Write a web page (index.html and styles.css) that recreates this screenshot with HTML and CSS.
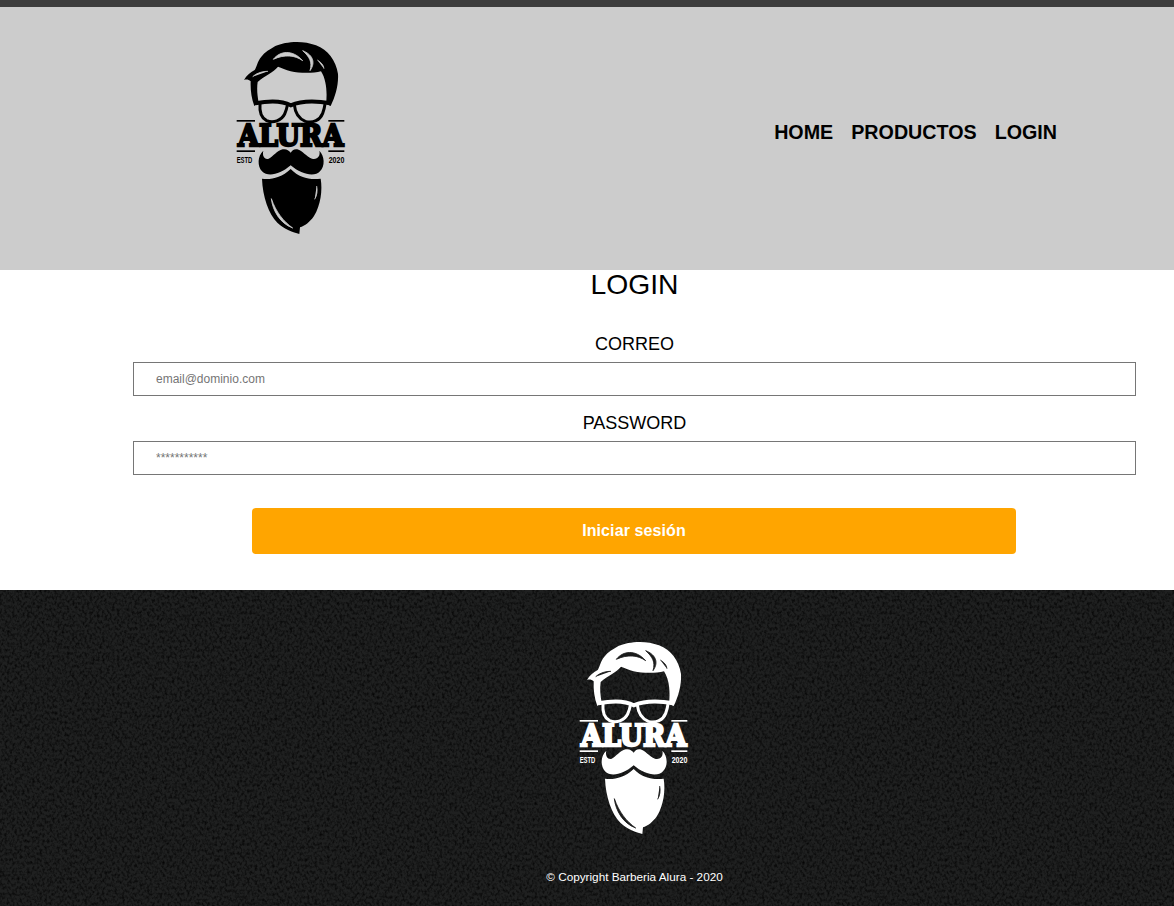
FILE: index.html
```html
<!DOCTYPE html>
<html lang="es">
<head>
    <meta charset="utf-8">
    <title>Barberia Alura</title>
    <link rel="stylesheet" href="styles.css">
</head>
<body>
    <!-- logo drawing, used twice: header (black) and footer (white) -->
    <svg class="defs" width="0" height="0">
        <symbol id="logo-art" viewBox="0 0 420 645">
            <path d="M72 150 C80 136 90 128 104 120 C110 112 112 94 124 80 C134 66 150 58 166 48 C196 34 250 30 288 46 C324 60 348 92 354 132 C356 165 346 200 332 228 L318 222 C322 190 320 150 303 124 C280 130 240 130 212 124 C198 120 184 114 174 110 C160 128 134 136 113 156 C110 176 112 196 116 218 L103 228 C94 205 91 178 92 154 C86 148 78 148 72 150 Z"/>
            <path class="cut" d="M160 88 C180 62 218 58 248 92 C226 76 194 72 160 88 Z"/>
            <path class="cut" d="M248 62 C274 72 290 94 270 122 C278 96 268 80 248 62 Z"/>
            <path class="cut" d="M292 90 C304 98 310 104 312 116"/>
            <path class="cut" d="M98 140 C112 128 128 124 144 124"/>
            <g class="frame">
                <path class="brow" d="M106 220 C150 212 190 214 212 226 C240 214 285 212 332 220"/>
                <path d="M120 222 C118 246 124 264 140 272 C160 280 184 272 194 252 C199 242 201 232 203 222"/>
                <path d="M223 224 C225 246 236 266 256 274 C280 280 300 270 308 250 C312 240 314 230 315 222"/>
            </g>
            <rect x="50" y="270" width="55" height="5"/>
            <rect x="325" y="270" width="48" height="5"/>
            <rect x="50" y="361" width="55" height="5"/>
            <rect x="325" y="361" width="48" height="5"/>
            <path d="M130 362 C112 378 112 408 126 424 C144 442 180 434 212 406 C244 434 284 442 300 424 C316 408 314 378 298 362 C302 378 292 390 276 386 C258 380 248 362 232 358 C222 356 216 362 212 368 C206 360 198 356 188 358 C170 362 160 380 146 386 C134 390 126 378 130 362 Z"/>
            <path d="M126 446 C150 450 184 444 212 417 C238 444 270 450 302 446 C308 480 302 526 282 558 C270 576 254 588 240 592 L238 612 C220 606 192 598 172 578 C146 552 128 500 126 446 Z"/>
            <path class="cut" d="M154 506 C158 542 180 580 218 594 C190 574 168 546 154 506 Z"/>
            <path class="cut" d="M290 468 C293 482 291 496 284 508"/>
        </symbol>
    </svg>

    <div class="top-bar"></div>

    <header class="site-header">
        <svg class="logo logo-dark" viewBox="0 0 420 645">
            <use href="#logo-art" width="420" height="645"/>
            <text class="logo-name" x="54" y="349" textLength="316" lengthAdjust="spacingAndGlyphs">ALURA</text>
            <text class="logo-date" x="50" y="400" textLength="47" lengthAdjust="spacingAndGlyphs">ESTD</text>
            <text class="logo-date" x="326" y="400" textLength="47" lengthAdjust="spacingAndGlyphs">2020</text>
        </svg>
        <nav class="menu">
            <a href="#">HOME</a>
            <a href="#">PRODUCTOS</a>
            <a href="#">LOGIN</a>
        </nav>
    </header>

    <main class="login">
        <h1>LOGIN</h1>
        <form class="login-form">
            <label for="correo">CORREO</label>
            <input id="correo" type="email" placeholder="email@dominio.com">
            <label for="password">PASSWORD</label>
            <input id="password" type="password" placeholder="***********">
            <button type="button">Iniciar sesión</button>
        </form>
    </main>

    <footer class="site-footer">
        <!-- grain of the footer background -->
        <svg class="grain" width="100%" height="100%">
            <filter id="noise" x="0" y="0" width="100%" height="100%">
                <feTurbulence type="fractalNoise" baseFrequency="0.4 0.32" numOctaves="2" seed="7"/>
                <feColorMatrix type="matrix" values="0 0 0 0 0  0 0 0 0 0  0 0 0 0 0  1.7 0 0 0 -0.68"/>
            </filter>
            <rect width="100%" height="100%" filter="url(#noise)"/>
        </svg>
        <svg class="logo logo-light" viewBox="0 0 420 645">
            <use href="#logo-art" width="420" height="645"/>
            <text class="logo-name" x="54" y="349" textLength="316" lengthAdjust="spacingAndGlyphs">ALURA</text>
            <text class="logo-date" x="50" y="400" textLength="47" lengthAdjust="spacingAndGlyphs">ESTD</text>
            <text class="logo-date" x="326" y="400" textLength="47" lengthAdjust="spacingAndGlyphs">2020</text>
        </svg>
        <p>© Copyright Barberia Alura - 2020</p>
    </footer>
</body>
</html>
```

FILE: styles.css
```css
body {
    margin: 0;
    font-family: "Liberation Sans", Arial, sans-serif;
    color: #000;
    background-color: #fff;
}

.defs {
    display: block;
    height: 0;
}

.top-bar {
    height: 7px;
    background-color: #3d3d3d;
}

/* Logo */
.logo {
    display: block;
    flex-shrink: 0;
    width: 140px;
    height: 215px;
}

.logo-dark {
    fill: #000;
    color: #000;
    --cut: #ccc;
}

.logo-light {
    fill: #fff;
    color: #fff;
    --cut: #1a1b1b;
}

.cut {
    fill: var(--cut);
    stroke: var(--cut);
    stroke-width: 2.5;
}

.frame {
    fill: none;
    stroke: currentColor;
    stroke-width: 9;
}

.brow {
    stroke-width: 12;
}

.logo-name {
    font-family: "DejaVu Serif", serif;
    font-size: 87px;
    font-weight: bold;
    stroke: currentColor;
    stroke-width: 7;
}

.logo-date {
    font-family: "Liberation Sans", Arial, sans-serif;
    font-size: 28px;
    font-weight: bold;
}

/* Header */
.site-header {
    display: flex;
    justify-content: space-between;
    height: 263px;
    padding: 23px 117px 0 220px;
    box-sizing: border-box;
    background-color: #ccc;
}

.menu {
    display: flex;
    gap: 18px;
    margin-top: 91px;
    font-size: 19.7px;
    font-weight: bold;
}

.menu a {
    color: #000;
    text-decoration: none;
}

/* Login */
.login {
    padding: 0 38px 36px 133px;
    text-align: center;
}

.login h1 {
    margin: 0;
    font-size: 28.3px;
    line-height: 28px;
    font-weight: normal;
}

.login-form {
    display: flex;
    flex-direction: column;
    margin-top: 36px;
}

.login-form label {
    font-size: 18px;
    margin-bottom: 7px;
}

.login-form input {
    height: 34px;
    padding: 0 22px;
    margin-bottom: 17px;
    box-sizing: border-box;
    border: 1px solid #767676;
    font-family: "Liberation Sans", Arial, sans-serif;
    font-size: 12px;
}

.login-form input::placeholder {
    color: #757575;
}

.login-form button {
    width: 764px;
    height: 46px;
    margin: 16px 0 0 119px;
    border: none;
    border-radius: 4px;
    background-color: #ffa500;
    color: #fff;
    font-family: "Liberation Sans", Arial, sans-serif;
    font-size: 16px;
    letter-spacing: 0.1px;
    font-weight: bold;
}

/* Footer */
.site-footer {
    position: relative;
    height: 316px;
    overflow: hidden;
    display: flex;
    flex-direction: column;
    align-items: center;
    padding: 40px 0 0 95px;
    box-sizing: border-box;
    background-color: #1f2020;
    color: #fff;
}

.grain {
    position: absolute;
    top: 0;
    left: 0;
}

.site-footer .logo,
.site-footer p {
    position: relative;
}

.site-footer .logo {
    margin-right: 3px;
}

.site-footer p {
    margin: 25px 0 0;
    font-size: 11.75px;
}
```
